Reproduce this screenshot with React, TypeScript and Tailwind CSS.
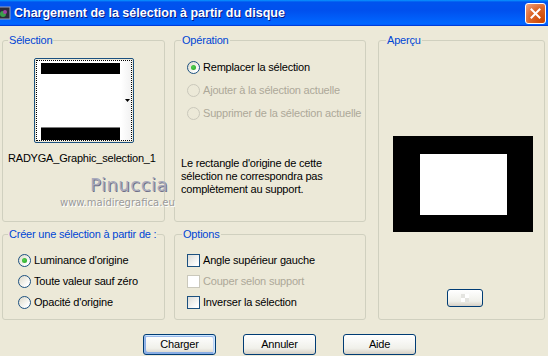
import React from "react";

const BLUE_LEGEND = "text-[#0046d5]";

function Radio({ label, checked = false, disabled = false }: { label: string; checked?: boolean; disabled?: boolean }) {
  return (
    <div className="flex h-[13px] items-center gap-[3px] whitespace-nowrap">
      <span
        className={
          disabled
            ? "flex h-[13px] w-[13px] shrink-0 items-center justify-center rounded-full border border-[#cac8bb] bg-[#ece9d8]"
            : "flex h-[13px] w-[13px] shrink-0 items-center justify-center rounded-full border border-[#1c5180] bg-[linear-gradient(135deg,#dcd9c9,#ffffff_80%)]"
        }
      >
        {checked && <span className="h-[5px] w-[5px] rounded-full bg-[radial-gradient(circle_at_40%_40%,#55d051,#21a121)]" />}
      </span>
      <span className={disabled ? "text-[#aca899]" : "text-black"}>{label}</span>
    </div>
  );
}

function Check({ label, disabled = false }: { label: string; disabled?: boolean }) {
  return (
    <div className="flex h-[13px] items-center gap-[3px] whitespace-nowrap">
      <span
        className={
          disabled
            ? "h-[13px] w-[13px] shrink-0 border border-[#cac8bb] bg-white"
            : "h-[13px] w-[13px] shrink-0 border border-[#1c5180] bg-[linear-gradient(135deg,#dcdcd7,#ffffff_85%)]"
        }
      />
      <span className={disabled ? "text-[#aca899]" : "text-black"}>{label}</span>
    </div>
  );
}

function Group({ title, className, legendClass = "ml-[5px]", children }: { title: string; className: string; legendClass?: string; children: React.ReactNode }) {
  return (
    <fieldset className={"min-w-0 rounded-[3px] border border-[#d0d0bf] " + className}>
      <legend className={"whitespace-nowrap px-px leading-[13px] " + BLUE_LEGEND + " " + legendClass}>{title}</legend>
      {children}
    </fieldset>
  );
}

function XpButton({ label, primary = false }: { label: string; primary?: boolean }) {
  return (
    <button
      className={
        primary
          ? "h-[21px] w-[73px] rounded-[3px] border border-[#003c74] bg-[linear-gradient(180deg,#ffffff,#f0f0ea_70%,#d6d0c5)] text-black shadow-[inset_-1px_1px_#cee7ff,inset_1px_2px_#98b8ea,inset_-2px_2px_#bcd4f6,inset_1px_-1px_#89ade4,inset_2px_-2px_#89ade4]"
          : "h-[21px] w-[73px] rounded-[3px] border border-[#003c74] bg-[linear-gradient(180deg,#ffffff,#f0f0ea_70%,#d6d0c5)] text-black"
      }
    >
      {label}
    </button>
  );
}

export default function App() {
  return (
    <div className="relative flex h-[356px] w-[548px] flex-col overflow-hidden bg-[#ece9d8] font-['Liberation_Sans',Arial,sans-serif] text-[11px] leading-[13px] tracking-[-0.2px] text-black">
      {/* title bar */}
      <div className="flex h-[26px] shrink-0 items-center bg-[linear-gradient(180deg,#0997ff,#0053ee_8%,#0050ee_40%,#06f_88%,#06f_93%,#005bff_95%,#003dd7_96%,#003dd7)]">
        <svg width="13" height="14" viewBox="0 0 13 14" className="ml-[-2px] shrink-0">
          <rect x="0" y="1" width="12" height="12" fill="#2b2b3a" stroke="#9aa4c0" />
          <circle cx="5" cy="8" r="3" fill="#3aa04a" />
          <circle cx="7" cy="6" r="2" fill="#a040a0" />
        </svg>
        <span className="ml-[3px] text-[12.5px] font-bold tracking-normal text-white [text-shadow:1px_1px_#0a1883]">
          Chargement de la sélection à partir du disque
        </span>
        <div className="ml-auto mr-[2px] flex h-[21px] w-[21px] items-center justify-center rounded-[3px] border border-white bg-[radial-gradient(circle_at_90%_90%,#cc4600,#dc6527_55%,#f0a688)]">
          <svg width="11" height="11" viewBox="0 0 11 11">
            <path d="M1.5 1.5 L9.5 9.5 M9.5 1.5 L1.5 9.5" stroke="white" strokeWidth="2" strokeLinecap="square" />
          </svg>
        </div>
      </div>

      {/* body */}
      <div className="grid grid-cols-[163px_192px_170px] grid-rows-[188px_92px] gap-x-[9px] gap-y-[6px] pl-[2px] pt-[8px]">
        <Group title="Sélection" className="h-[188px]">
          <div className="pl-[31px] pt-[11px]">
            <div className="h-[85px] w-[100px] rounded-[2px] border border-[#1c5180] p-px">
              <div className="flex h-full w-full border border-dotted border-black bg-white">
                <div className="ml-[4px] mt-[2px] flex w-[79px] flex-col">
                  <div className="h-[11px] bg-black shadow-[0_1px_#7a7a7a]" />
                  <div className="flex-1 bg-white" />
                  <div className="h-[12px] bg-black shadow-[0_-1px_#7a7a7a]" />
                </div>
                <div className="ml-px flex flex-1 items-center justify-end bg-[linear-gradient(90deg,#ffffff,#f2f2f2)] pr-px">
                  <svg width="5" height="3" viewBox="0 0 5 3">
                    <path d="M0 0 H5 L2.5 3 Z" fill="black" />
                  </svg>
                </div>
              </div>
            </div>
          </div>
          <div className="mt-[9px] whitespace-nowrap pl-[5px]">RADYGA_Graphic_selection_1</div>
        </Group>

        <Group title="Opération" className="h-[188px]" legendClass="ml-[6px]">
          <div className="flex flex-col gap-[10px] pl-[12px] pt-[14px]">
            <Radio label="Remplacer la sélection" checked />
            <Radio label="Ajouter à la sélection actuelle" disabled />
            <Radio label="Supprimer de la sélection actuelle" disabled />
          </div>
          <p className="mt-[37px] whitespace-nowrap pl-[6px]">
            Le rectangle d'origine de cette
            <br />
            sélection ne correspondra pas
            <br />
            complètement au support.
          </p>
        </Group>

        <Group title="Aperçu" className="row-span-2 ml-[3px] h-[286px] w-[167px]" legendClass="ml-[7px]">
          <div className="flex flex-col items-start pl-[14px] pt-[89px]">
            <div className="h-[96px] w-[140px] bg-black pl-[27px] pt-[18px]">
              <div className="h-[61px] w-[87px] bg-white" />
            </div>
            <button className="ml-[54px] mt-[57px] flex h-[18px] w-[36px] items-center justify-center rounded-[3px] border border-[#003c74] bg-[linear-gradient(180deg,#ffffff,#f0f0ea_70%,#d6d0c5)]">
              <span className="grid grid-cols-2">
                <span className="h-[4px] w-[4px] bg-[#e4e4e0]" />
                <span className="h-[4px] w-[4px] bg-white" />
                <span className="h-[4px] w-[4px] bg-white" />
                <span className="h-[4px] w-[4px] bg-[#e4e4e0]" />
              </span>
            </button>
          </div>
        </Group>

        <Group title="Créer une sélection à partir de :" className="h-[92px]">
          <div className="flex flex-col gap-[8px] pl-[15px] pt-[13px]">
            <Radio label="Luminance d'origine" checked />
            <Radio label="Toute valeur sauf zéro" />
            <Radio label="Opacité d'origine" />
          </div>
        </Group>

        <Group title="Options" className="h-[92px]" legendClass="ml-[7px]">
          <div className="flex flex-col gap-[8px] pl-[12px] pt-[13px]">
            <Check label="Angle supérieur gauche" />
            <Check label="Couper selon support" disabled />
            <Check label="Inverser la sélection" />
          </div>
        </Group>
      </div>

      {/* buttons */}
      <div className="mt-[14px] flex gap-[27px] pl-[143px]">
        <XpButton label="Charger" primary />
        <XpButton label="Annuler" />
        <XpButton label="Aide" />
      </div>

      {/* watermark */}
      <div className="pointer-events-none absolute left-[90px] top-[175px] font-['DejaVu_Sans',sans-serif] text-[18px] leading-[20px] tracking-[0.5px] text-[#a9abbd] [text-shadow:1px_1px_#6f7088]">
        Pinuccia
      </div>
      <div className="pointer-events-none absolute left-[60px] top-[197px] font-['DejaVu_Sans',sans-serif] text-[10px] leading-[12px] tracking-normal text-[#9a9a9a] [text-shadow:1px_1px_#ffffff]">
        www.maidiregrafica.eu
      </div>
    </div>
  );
}
